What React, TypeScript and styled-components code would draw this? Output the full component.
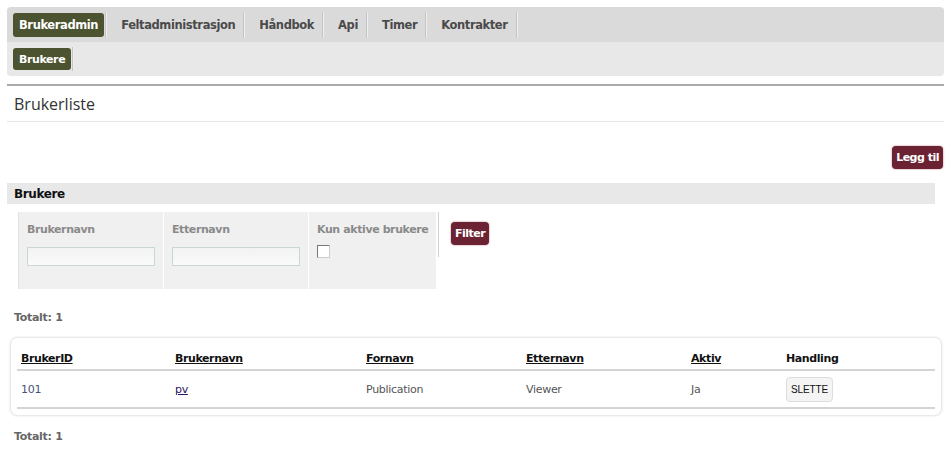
import React from "react";
import styled, { createGlobalStyle } from "styled-components";

const GlobalStyle = createGlobalStyle`
  body {
    margin: 0;
    background: #fff;
    font-family: "DejaVu Sans", Verdana, sans-serif;
    font-size: 11px;
    color: #555;
  }
`;

const Page = styled.div`
  padding: 7px 7px 0 7px;
  width: 951px;
  box-sizing: border-box;
`;

const NavBox = styled.div`
  width: 937px;
  border-radius: 4px;
  overflow: hidden;
`;

const NavRow = styled.div<{ $sub?: boolean }>`
  display: flex;
  align-items: center;
  height: ${(p) => (p.$sub ? 34 : 35)}px;
  padding-left: 6px;
  background: ${(p) => (p.$sub ? "#e8e8e8" : "#dadada")};
`;

const NavItem = styled.div<{ $active?: boolean; $small?: boolean }>`
  display: flex;
  align-items: center;
  height: ${(p) => (p.$small ? 22 : 24)}px;
  padding: 0 ${(p) => (p.$active ? 6 : 7)}px;
  border-radius: 3px;
  font-weight: bold;
  font-size: ${(p) => (p.$small ? 11 : 11.5)}px;
  letter-spacing: -0.4px;
  color: ${(p) => (p.$active ? "#fff" : "#4a4a4a")};
  background: ${(p) => (p.$active ? "#4b5330" : "transparent")};
`;

const NavSep = styled.span<{ $small?: boolean }>`
  width: 1px;
  height: ${(p) => (p.$small ? 24 : 26)}px;
  margin: 0 8px 0 1px;
  background: #c4c4c4;
  box-shadow: 1px 0 0 #eee;
`;

const Rule = styled.div`
  margin-top: 8px;
  width: 937px;
  height: 2px;
  background: #a9a9a9;
`;

const TitleBar = styled.div`
  height: 35px;
  display: flex;
  align-items: center;
  padding-left: 7px;
  border-bottom: 1px solid #e5e5e5;
  font-family: "Open Sans", sans-serif;
  font-size: 16px;
  color: #333;
`;

const ActionRow = styled.div`
  display: flex;
  justify-content: flex-end;
  padding: 24px 1px 0 0;
  height: 23px;
`;

const DarkButton = styled.div`
  display: inline-flex;
  align-items: center;
  height: 23px;
  padding: 0 4px;
  border-radius: 4px;
  background: #6b2333;
  box-shadow: 0 0 2px #b47080;
  color: #fff;
  font-weight: bold;
  font-size: 11px;
  letter-spacing: -0.5px;
`;

const SectionHead = styled.div`
  margin-top: 14px;
  width: 928px;
  height: 21px;
  display: flex;
  align-items: center;
  padding-left: 7px;
  box-sizing: border-box;
  background: #e8e8e8;
  font-weight: bold;
  font-size: 12px;
  letter-spacing: -0.4px;
  color: #111;
`;

const FilterRow = styled.div`
  display: flex;
  align-items: flex-start;
  margin: 8px 0 0 11px;
`;

const FilterPanel = styled.div`
  display: flex;
  height: 77px;
  background: #f0f0f0;
  border-left: 1px solid #e2e2e2;
`;

const FilterCell = styled.div<{ $last?: boolean }>`
  width: ${(p) => (p.$last ? 127 : 145)}px;
  padding: 11px 0 0 8px;
  box-sizing: border-box;
  border-right: ${(p) => (p.$last ? "none" : "1px solid #fff")};
`;

const FilterLabel = styled.div`
  font-weight: bold;
  font-size: 11px;
  letter-spacing: -0.4px;
  color: #8a8a8a;
  height: 24px;
`;

const TextInput = styled.div`
  width: 128px;
  height: 19px;
  box-sizing: border-box;
  border: 1px solid #c8d8d2;
  background: linear-gradient(#f2f2f2, #fafafa);
`;

const CheckBox = styled.div`
  width: 11px;
  height: 11px;
  border: 1px solid #777;
  border-right-color: #ccc;
  border-bottom-color: #ccc;
  background: #fff;
  margin-top: -2px;
`;

const VSep = styled.div`
  width: 1px;
  height: 45px;
  margin-left: 2px;
  background: #d0d0d0;
`;

const FilterButtonWrap = styled.div`
  margin: 10px 0 0 12px;
`;

const Total = styled.div<{ $gap: number }>`
  margin: ${(p) => p.$gap}px 0 0 7px;
  font-weight: bold;
  font-size: 11px;
  letter-spacing: -0.3px;
  color: #666;
`;

const Card = styled.div`
  margin: 14px 0 0 4px;
  width: 930px;
  box-sizing: border-box;
  padding: 10px 6px 6px 6px;
  background: #fff;
  border-radius: 6px;
  box-shadow: 0 0 3px rgba(0, 0, 0, 0.25);
`;

const Grid = styled.div`
  display: grid;
  grid-template-columns: 154px 191px 160px 165px 95px 1fr;
`;

const HeadCell = styled.div<{ $link?: boolean }>`
  height: 21px;
  padding-left: 4px;
  display: flex;
  align-items: center;
  border-bottom: 2px solid #d4d4d4;
  font-weight: bold;
  font-size: 11px;
  letter-spacing: -0.4px;
  color: #111;
  text-decoration: ${(p) => (p.$link ? "underline" : "none")};
`;

const BodyCell = styled.div<{ $link?: boolean }>`
  height: 36px;
  padding-left: 4px;
  display: flex;
  align-items: center;
  border-bottom: 2px solid #d4d4d4;
  font-size: 11px;
  letter-spacing: -0.3px;
  color: ${(p) => (p.$link ? "#2a1560" : "#555")};
  text-decoration: ${(p) => (p.$link ? "underline" : "none")};
`;

const IdCell = styled(BodyCell)`
  color: #445577;
`;

const SmallButton = styled.div`
  display: inline-flex;
  align-items: center;
  height: 25px;
  padding: 0 4px;
  box-sizing: border-box;
  border: 1px solid #ddd;
  border-radius: 4px;
  background: #f4f4f4;
  font-family: "Liberation Sans", Arial, sans-serif;
  font-size: 10px;
  letter-spacing: -0.1px;
  color: #111;
`;

const topNav = ["Feltadministrasjon", "Håndbok", "Api", "Timer", "Kontrakter"];

const columns = [
  { title: "BrukerID", link: true },
  { title: "Brukernavn", link: true },
  { title: "Fornavn", link: true },
  { title: "Etternavn", link: true },
  { title: "Aktiv", link: true },
  { title: "Handling", link: false },
];

export default function App() {
  return (
    <>
      <GlobalStyle />
      <Page>
        <NavBox>
          <NavRow>
            <NavItem $active>Brukeradmin</NavItem>
            <NavSep />
            {topNav.map((t) => (
              <React.Fragment key={t}>
                <NavItem>{t}</NavItem>
                <NavSep />
              </React.Fragment>
            ))}
          </NavRow>
          <NavRow $sub>
            <NavItem $active $small>
              Brukere
            </NavItem>
            <NavSep $small />
          </NavRow>
        </NavBox>
        <Rule />
        <TitleBar>Brukerliste</TitleBar>
        <ActionRow>
          <DarkButton>Legg til</DarkButton>
        </ActionRow>
        <SectionHead>Brukere</SectionHead>
        <FilterRow>
          <FilterPanel>
            <FilterCell>
              <FilterLabel>Brukernavn</FilterLabel>
              <TextInput />
            </FilterCell>
            <FilterCell>
              <FilterLabel>Etternavn</FilterLabel>
              <TextInput />
            </FilterCell>
            <FilterCell $last>
              <FilterLabel>Kun aktive brukere</FilterLabel>
              <CheckBox />
            </FilterCell>
          </FilterPanel>
          <VSep />
          <FilterButtonWrap>
            <DarkButton>Filter</DarkButton>
          </FilterButtonWrap>
        </FilterRow>
        <Total $gap={22}>Totalt: 1</Total>
        <Card>
          <Grid>
            {columns.map((c) => (
              <HeadCell key={c.title} $link={c.link}>
                {c.title}
              </HeadCell>
            ))}
            <IdCell>101</IdCell>
            <BodyCell $link>pv</BodyCell>
            <BodyCell>Publication</BodyCell>
            <BodyCell>Viewer</BodyCell>
            <BodyCell>Ja</BodyCell>
            <BodyCell>
              <SmallButton>SLETTE</SmallButton>
            </BodyCell>
          </Grid>
        </Card>
        <Total $gap={15}>Totalt: 1</Total>
      </Page>
    </>
  );
}
